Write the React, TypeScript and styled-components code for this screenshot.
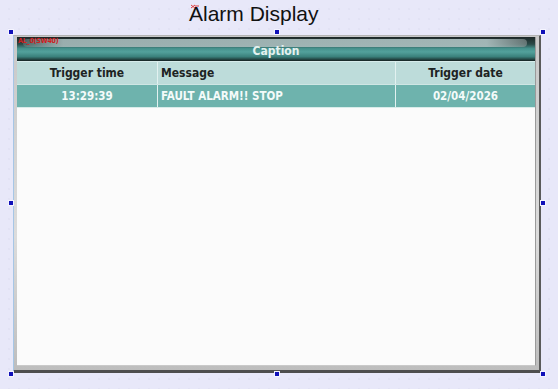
import styled, { createGlobalStyle } from "styled-components";

const GlobalStyle = createGlobalStyle`
  html, body {
    margin: 0;
    padding: 0;
    background: #e8e8f9;
  }
`;

const Stage = styled.div`
  position: relative;
  width: 558px;
  height: 389px;
  overflow: hidden;
  background-color: #e8e8f9;
  background-image: radial-gradient(circle, rgba(160, 160, 200, 0.12) 0.6px, transparent 0.9px);
  background-size: 10px 10px;
  background-position: 4px 4px;
`;

const Title = styled.div`
  position: relative;
  height: 35px;
  box-sizing: border-box;
  padding: 2px 0 0 189px;
  font-family: "Liberation Sans", Arial, sans-serif;
  font-size: 21px;
  line-height: 24px;
  color: #111;
`;

const TitleMark = styled.svg`
  position: absolute;
  left: 190px;
  top: 4px;
`;

const Frame = styled.div`
  position: relative;
  margin-left: 13px;
  width: 528px;
  height: 338px;
  box-sizing: border-box;
  border-style: solid;
  border-width: 1px 2px 3px 1px;
  border-color: #b4b4b4 #5a5a5a #4e4e4e #a6c6e6;
  background: linear-gradient(to bottom, #c8c8c8, #dcdcdc 60%, #bdbdbd);
  padding: 1px 3px 4px 3px;
  display: flex;
`;

const Inner = styled.div`
  flex: 1;
  display: flex;
  flex-direction: column;
  background: #fbfbfb;
  border-right: 1px solid #9a9a9a;
  border-bottom: 1px solid #c9c9c9;
`;

const CaptionBar = styled.div`
  position: relative;
  height: 24px;
  flex-shrink: 0;
  display: flex;
  align-items: flex-end;
  justify-content: center;
  background: linear-gradient(
    to bottom,
    #1d2727 0%,
    #2b4a48 30%,
    #45918c 48%,
    #53a19c 62%,
    #3a807b 82%,
    #152121 100%
  );
  font-family: "DejaVu Sans Condensed", "DejaVu Sans", sans-serif;
  font-weight: bold;
  font-size: 12px;
  color: #e4f2f0;
  padding-bottom: 3px;
  box-sizing: border-box;

  &::before {
    content: "";
    position: absolute;
    left: 6px;
    right: 8px;
    top: 2px;
    height: 8px;
    border-radius: 5px;
    background: linear-gradient(
      to right,
      rgba(110, 130, 130, 0.5),
      rgba(160, 180, 180, 0.95) 8%,
      rgba(168, 188, 188, 0.95) 92%,
      rgba(140, 150, 150, 0.6)
    );
  }
`;

const CaptionText = styled.span`
  position: relative;
`;

const Tag = styled.span`
  position: absolute;
  left: 1px;
  top: 0px;
  font-family: "DejaVu Sans Condensed", sans-serif;
  font-size: 7px;
  color: #d02020;
  letter-spacing: -0.2px;
  z-index: 1;
`;

const Row = styled.div<{ $head?: boolean }>`
  display: grid;
  grid-template-columns: 140px 1fr 140px;
  height: 23px;
  flex-shrink: 0;
  background: ${(p) => (p.$head ? "#bddcda" : "#6eb3ad")};
  border-top: 1px solid ${(p) => (p.$head ? "#d6eceb" : "#cfe6e4")};
  box-sizing: border-box;
  font-family: "DejaVu Sans Condensed", "DejaVu Sans", sans-serif;
  font-size: ${(p) => (p.$head ? "12px" : "11.5px")};
  font-weight: bold;
  color: ${(p) => (p.$head ? "#1d2323" : "#f4fbfa")};
`;

const Cell = styled.div<{ $align?: "left" | "center" }>`
  display: flex;
  align-items: center;
  justify-content: ${(p) => (p.$align === "left" ? "flex-start" : "center")};
  padding-left: ${(p) => (p.$align === "left" ? "3px" : "0")};
  border-left: 1px solid #e2f1f0;
  &:first-child {
    border-left: none;
  }
`;

const Body = styled.div`
  flex: 1;
  border-top: 1px solid #d8ecea;
`;

const Handle = styled.div`
  position: absolute;
  width: 4px;
  height: 4px;
  background: #1010b8;
  border: 1px solid #f4f4ff;
`;

const handles = [
  [8, 29],
  [274, 29],
  [540, 29],
  [8, 200],
  [540, 200],
  [8, 371],
  [274, 371],
  [540, 371],
];

export default function App() {
  return (
    <>
      <GlobalStyle />
      <Stage>
        <Title>
          <TitleMark width="10" height="6" viewBox="0 0 10 6">
            <path d="M1 1 L5 4 M5 1 L1 4 M5 2 L9 2" stroke="#e04040" strokeWidth="1" />
          </TitleMark>
          Alarm Display
        </Title>
        <Frame>
          <Inner>
            <CaptionBar>
              <Tag>AL_0(SW40)</Tag>
              <CaptionText>Caption</CaptionText>
            </CaptionBar>
            <Row $head>
              <Cell>Trigger time</Cell>
              <Cell $align="left">Message</Cell>
              <Cell>Trigger date</Cell>
            </Row>
            <Row>
              <Cell>13:29:39</Cell>
              <Cell $align="left">FAULT ALARM!! STOP</Cell>
              <Cell>02/04/2026</Cell>
            </Row>
            <Body />
          </Inner>
        </Frame>
        {handles.map(([x, y], i) => (
          <Handle key={i} style={{ left: x, top: y }} />
        ))}
      </Stage>
    </>
  );
}
